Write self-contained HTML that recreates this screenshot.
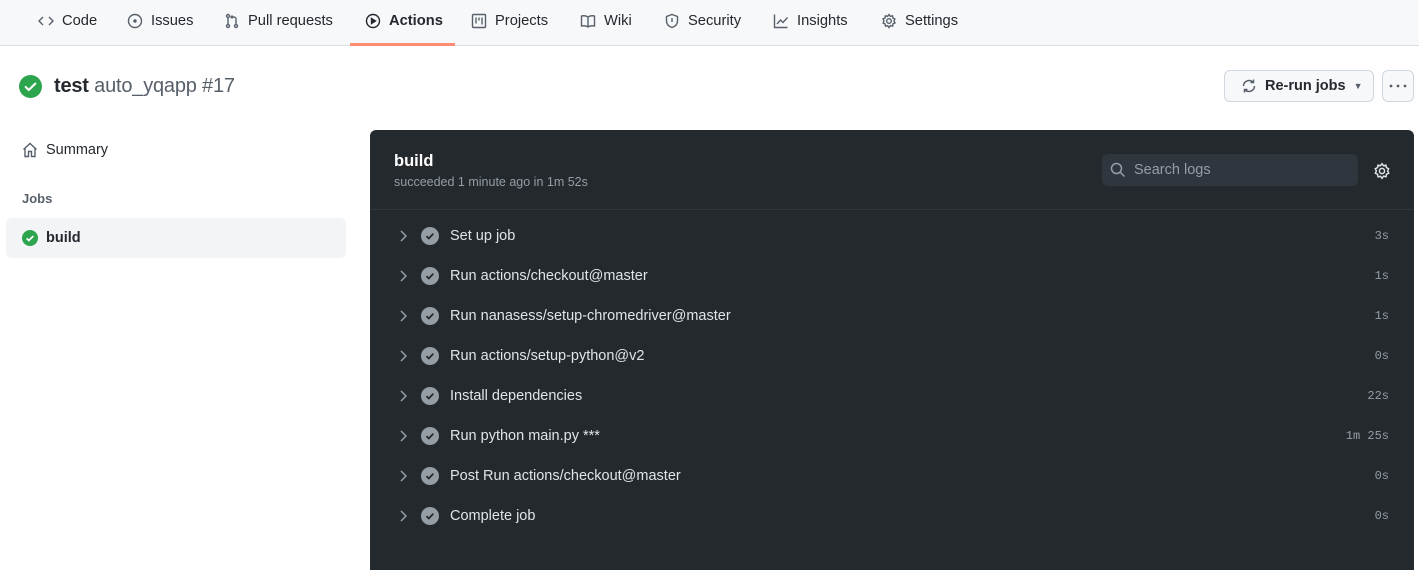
<!DOCTYPE html>
<html><head><meta charset="utf-8"><style>
*{box-sizing:border-box;margin:0;padding:0}
body{width:1419px;height:561px;overflow:hidden;background:#fff;font-family:"Liberation Sans",sans-serif;color:#24292f;position:relative}
.nav{position:absolute;left:0;top:0;width:1419px;height:46px;background:#f6f8fa;border-bottom:1px solid #d8dee4}
.t{position:absolute;top:13px;font-size:14.7px;color:#24292f;display:flex;align-items:center;gap:8px;white-space:nowrap}
.t svg{width:16px;height:16px;fill:none;stroke:#57606a;stroke-width:1.4}
.ul{position:absolute;left:350px;top:43px;width:105px;height:3px;background:#fd8c73}
.abs{position:absolute}
.dark{position:absolute;left:370px;top:130px;width:1044px;height:440px;background:#24292e;border-radius:6px 6px 0 0}
.step{position:absolute;left:0;width:1044px;height:40px;color:#e1e4e8;font-size:14.5px}
.step .ch{position:absolute;left:28px;top:13px}
.step .ck{position:absolute;left:51px;top:11px;width:18px;height:18px;border-radius:50%;background:#959da5}
.step .nm{position:absolute;left:80px;top:12px}
.step .tm{position:absolute;right:25px;top:13px;font-family:"Liberation Mono",monospace;font-size:12px;color:#959da5}
</style></head><body>
<div class="nav">
<div class="t" style="left:38px"><svg viewBox="0 0 16 16"><path d="M5 4L1 8l4 4M11 4l4 4-4 4"/></svg>Code</div>
<div class="t" style="left:127px"><svg viewBox="0 0 16 16"><circle cx="8" cy="8" r="6.5"/><circle cx="8" cy="8" r="1" fill="#57606a"/></svg>Issues</div>
<div class="t" style="left:224px"><svg viewBox="0 0 16 16"><circle cx="4" cy="3" r="1.5"/><circle cx="4" cy="13" r="1.5"/><circle cx="12" cy="13" r="1.5"/><path d="M4 4.5v7M12 11.5V6a2 2 0 0 0-2-2H7M8.5 2.5L7 4l1.5 1.5"/></svg>Pull requests</div>
<div class="t" style="left:365px;font-weight:bold"><svg viewBox="0 0 16 16" style="stroke:#24292f"><circle cx="8" cy="8" r="6.5"/><path d="M6.5 5.5v5l4-2.5z" fill="#24292f"/></svg>Actions</div>
<div class="t" style="left:471px"><svg viewBox="0 0 16 16"><rect x="1.5" y="1.5" width="13" height="13" rx="1"/><path d="M5 4.5v6M8 4.5v3M11 4.5v7"/></svg>Projects</div>
<div class="t" style="left:580px"><svg viewBox="0 0 16 16"><path d="M8 4c-2-1.5-4-1.5-6.5-1v10c2.5-.5 4.5-.5 6.5 1 2-1.5 4-1.5 6.5-1V3C12 2.5 10 2.5 8 4zM8 4v10"/></svg>Wiki</div>
<div class="t" style="left:664px"><svg viewBox="0 0 16 16"><path d="M8 1.5l5.5 2v4.5c0 3.5-2.5 5.5-5.5 6.5C5 13.5 2.5 11.5 2.5 8V3.5z M8 5v4"/></svg>Security</div>
<div class="t" style="left:773px"><svg viewBox="0 0 16 16"><path d="M1.5 1.5v13h13M4 11l3.5-4 2.5 2.5 4.5-5"/></svg>Insights</div>
<div class="t" style="left:881px"><svg viewBox="0 0 16 16"><circle cx="8" cy="8" r="2.3"/><path d="M8 1.5l1.3 1.8 2.2-.5.4 2.2 2 1L13 8l1 1.9-2 1-.4 2.2-2.2-.5L8 14.5l-1.3-1.8-2.2.5-.4-2.2-2-1L3 8 2 6l2-1 .4-2.2 2.2.5z"/></svg>Settings</div>
<div class="ul"></div>
</div>

<svg class="abs" style="left:19px;top:75px" width="23" height="23" viewBox="0 0 24 24"><circle cx="12" cy="12" r="12" fill="#2da44e"/><path d="M7 12.5l3.2 3.2L17 9" stroke="#fff" stroke-width="2.2" fill="none" stroke-linecap="round" stroke-linejoin="round"/></svg>
<div class="abs" style="left:54px;top:75px;font-size:20px;color:#24292f;letter-spacing:-0.2px"><b>test</b> <span style="color:#57606a">auto_yqapp #17</span></div>

<div class="abs" style="left:1224px;top:70px;width:150px;height:32px;border:1px solid #d0d7de;border-radius:6px;background:#f6f8fa;font-size:14.5px;font-weight:bold;display:flex;align-items:center;padding-left:16px;gap:8px">
<svg width="16" height="16" viewBox="0 0 16 16" fill="none" stroke="#57606a" stroke-width="1.5"><path d="M2.5 8a5.5 5.5 0 0 1 9.6-3.6M13.5 8a5.5 5.5 0 0 1-9.6 3.6M12.5 1.5v3h-3M3.5 14.5v-3h3"/></svg>Re-run jobs <span style="font-size:9px;color:#57606a">▼</span></div>
<div class="abs" style="left:1382px;top:70px;width:32px;height:32px;border:1px solid #d0d7de;border-radius:6px;background:#f6f8fa"></div>
<svg class="abs" style="left:1388px;top:84px" width="20" height="4"><circle cx="3" cy="2" r="1.4" fill="#57606a"/><circle cx="10" cy="2" r="1.4" fill="#57606a"/><circle cx="17" cy="2" r="1.4" fill="#57606a"/></svg>

<svg class="abs" style="left:22px;top:142px" width="16" height="16" viewBox="0 0 16 16" fill="none" stroke="#57606a" stroke-width="1.4"><path d="M1.5 7.5L8 1.5l6.5 6M3 6v8.5h3.5v-5h3v5H13V6"/></svg>
<div class="abs" style="left:46px;top:142px;font-size:14.5px">Summary</div>
<div class="abs" style="left:22px;top:191px;font-size:13px;color:#57606a;font-weight:bold">Jobs</div>
<div class="abs" style="left:6px;top:218px;width:340px;height:40px;background:#f3f4f6;border-radius:6px"></div>
<svg class="abs" style="left:22px;top:230px" width="16" height="16" viewBox="0 0 24 24"><circle cx="12" cy="12" r="12" fill="#2da44e"/><path d="M7 12.5l3.2 3.2L17 9" stroke="#fff" stroke-width="2.6" fill="none"/></svg>
<div class="abs" style="left:46px;top:230px;font-size:14.5px;font-weight:bold">build</div>

<div class="dark">
<div class="abs" style="left:24px;top:22px;font-size:16.5px;font-weight:bold;color:#fff">build</div>
<div class="abs" style="left:24px;top:45px;font-size:12.5px;color:#959da5">succeeded 1 minute ago in 1m 52s</div>
<div class="abs" style="left:732px;top:24px;width:256px;height:32px;background:#2f363d;border-radius:6px;color:#959da5;font-size:14.5px;padding:8px 0 0 32px">Search logs</div>
<svg class="abs" style="left:740px;top:32px" width="16" height="16" viewBox="0 0 16 16" fill="none" stroke="#959da5" stroke-width="1.5"><circle cx="6.5" cy="6.5" r="5"/><path d="M10.2 10.2L14.5 14.5"/></svg>
<svg class="abs" style="left:1003px;top:32px" width="18" height="18" viewBox="0 0 16 16" fill="none" stroke="#e1e4e8" stroke-width="1.3"><circle cx="8" cy="8" r="2.3"/><path d="M8 1.5l1.3 1.8 2.2-.5.4 2.2 2 1L13 8l1 1.9-2 1-.4 2.2-2.2-.5L8 14.5l-1.3-1.8-2.2.5-.4-2.2-2-1L3 8 2 6l2-1 .4-2.2 2.2.5z"/></svg>
<div class="abs" style="left:0;top:79px;width:1044px;height:1px;background:#2f363d"></div>
</div>

<div class="abs" style="left:370px;top:216px">
<div class="step" style="top:0"><svg class="ch" width="10" height="14" viewBox="0 0 10 14"><path d="M3 2l5 5-5 5" stroke="#959da5" stroke-width="1.5" fill="none"/></svg><div class="ck"><svg width="18" height="18" viewBox="0 0 18 18"><path d="M5.5 9.2l2.3 2.3 4.5-4.7" stroke="#24292e" stroke-width="1.8" fill="none"/></svg></div><div class="nm">Set up job</div><div class="tm">3s</div></div>
<div class="step" style="top:40px"><svg class="ch" width="10" height="14" viewBox="0 0 10 14"><path d="M3 2l5 5-5 5" stroke="#959da5" stroke-width="1.5" fill="none"/></svg><div class="ck"><svg width="18" height="18" viewBox="0 0 18 18"><path d="M5.5 9.2l2.3 2.3 4.5-4.7" stroke="#24292e" stroke-width="1.8" fill="none"/></svg></div><div class="nm">Run actions/checkout@master</div><div class="tm">1s</div></div>
<div class="step" style="top:80px"><svg class="ch" width="10" height="14" viewBox="0 0 10 14"><path d="M3 2l5 5-5 5" stroke="#959da5" stroke-width="1.5" fill="none"/></svg><div class="ck"><svg width="18" height="18" viewBox="0 0 18 18"><path d="M5.5 9.2l2.3 2.3 4.5-4.7" stroke="#24292e" stroke-width="1.8" fill="none"/></svg></div><div class="nm">Run nanasess/setup-chromedriver@master</div><div class="tm">1s</div></div>
<div class="step" style="top:120px"><svg class="ch" width="10" height="14" viewBox="0 0 10 14"><path d="M3 2l5 5-5 5" stroke="#959da5" stroke-width="1.5" fill="none"/></svg><div class="ck"><svg width="18" height="18" viewBox="0 0 18 18"><path d="M5.5 9.2l2.3 2.3 4.5-4.7" stroke="#24292e" stroke-width="1.8" fill="none"/></svg></div><div class="nm">Run actions/setup-python@v2</div><div class="tm">0s</div></div>
<div class="step" style="top:160px"><svg class="ch" width="10" height="14" viewBox="0 0 10 14"><path d="M3 2l5 5-5 5" stroke="#959da5" stroke-width="1.5" fill="none"/></svg><div class="ck"><svg width="18" height="18" viewBox="0 0 18 18"><path d="M5.5 9.2l2.3 2.3 4.5-4.7" stroke="#24292e" stroke-width="1.8" fill="none"/></svg></div><div class="nm">Install dependencies</div><div class="tm">22s</div></div>
<div class="step" style="top:200px"><svg class="ch" width="10" height="14" viewBox="0 0 10 14"><path d="M3 2l5 5-5 5" stroke="#959da5" stroke-width="1.5" fill="none"/></svg><div class="ck"><svg width="18" height="18" viewBox="0 0 18 18"><path d="M5.5 9.2l2.3 2.3 4.5-4.7" stroke="#24292e" stroke-width="1.8" fill="none"/></svg></div><div class="nm">Run python main.py ***</div><div class="tm">1m 25s</div></div>
<div class="step" style="top:240px"><svg class="ch" width="10" height="14" viewBox="0 0 10 14"><path d="M3 2l5 5-5 5" stroke="#959da5" stroke-width="1.5" fill="none"/></svg><div class="ck"><svg width="18" height="18" viewBox="0 0 18 18"><path d="M5.5 9.2l2.3 2.3 4.5-4.7" stroke="#24292e" stroke-width="1.8" fill="none"/></svg></div><div class="nm">Post Run actions/checkout@master</div><div class="tm">0s</div></div>
<div class="step" style="top:280px"><svg class="ch" width="10" height="14" viewBox="0 0 10 14"><path d="M3 2l5 5-5 5" stroke="#959da5" stroke-width="1.5" fill="none"/></svg><div class="ck"><svg width="18" height="18" viewBox="0 0 18 18"><path d="M5.5 9.2l2.3 2.3 4.5-4.7" stroke="#24292e" stroke-width="1.8" fill="none"/></svg></div><div class="nm">Complete job</div><div class="tm">0s</div></div>
</div>
</body></html>
